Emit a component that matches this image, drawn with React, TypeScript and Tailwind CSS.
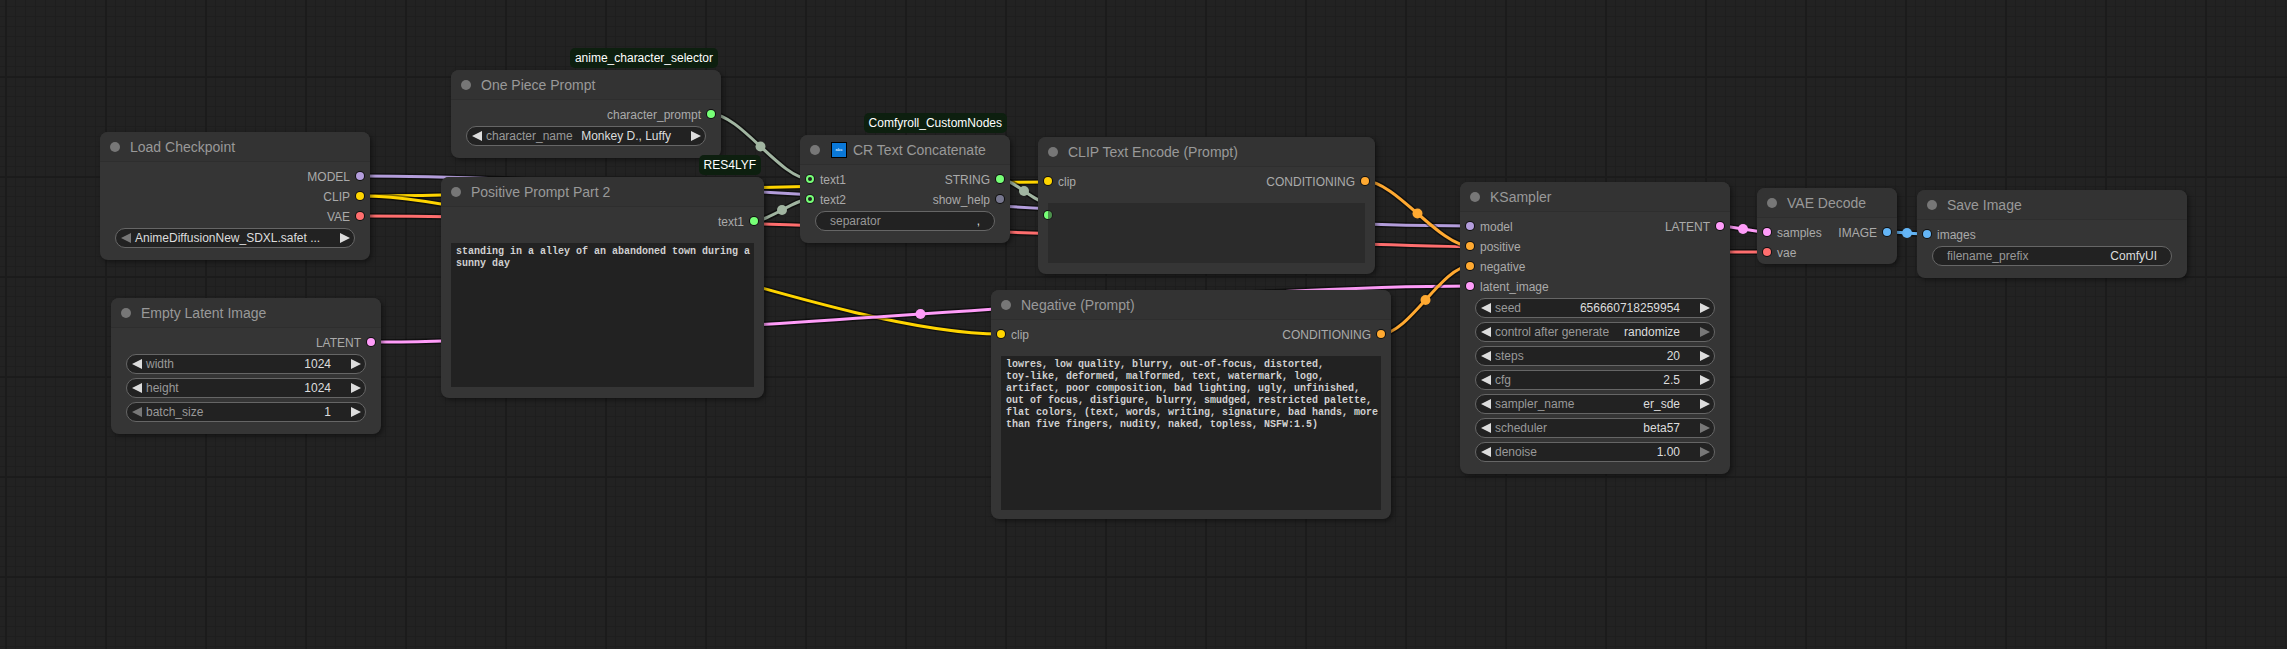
const wires = [
  { from: [361, 176], to: [1470, 226], color: "#B39DDB" },
  { from: [361, 196], to: [1048, 182], color: "#FFD500" },
  { from: [361, 196], to: [1001, 334], color: "#FFD500" },
  { from: [361, 216], to: [1766, 252], color: "#FF6E6E" },
  { from: [371, 342], to: [1470, 286], color: "#FF9CF9" },
  { from: [711, 114], to: [810, 179], color: "#A1B5A1" },
  { from: [754, 221], to: [810, 199], color: "#A1B5A1" },
  { from: [1000, 179], to: [1048, 203], color: "#A1B5A1" },
  { from: [1365, 181], to: [1470, 246], color: "#FFA931" },
  { from: [1381, 334], to: [1470, 266], color: "#FFA931" },
  { from: [1720, 226], to: [1766, 232], color: "#FF9CF9" },
  { from: [1887, 232], to: [1927, 234], color: "#64B5F6" },
];

function Wire({ from, to, color }: { from: number[]; to: number[]; color: string }) {
  const dist = Math.hypot(to[0] - from[0], to[1] - from[1]);
  const c1 = from[0] + dist * 0.25;
  const c2 = to[0] - dist * 0.25;
  const d = `M${from[0]} ${from[1]} C${c1} ${from[1]} ${c2} ${to[1]} ${to[0]} ${to[1]}`;
  const mx = (from[0] + 3 * c1 + 3 * c2 + to[0]) / 8;
  const my = (from[1] + to[1]) / 2;
  return (
    <g fill="none">
      <path d={d} stroke="#000" strokeOpacity="0.5" strokeWidth="6" />
      <path d={d} stroke={color} strokeWidth="3" />
      <circle cx={mx} cy={my} r="5" fill={color} />
    </g>
  );
}

function Arrow({ dir, dim }: { dir: "left" | "right"; dim?: boolean }) {
  return (
    <svg width="10" height="10" viewBox="0 0 10 10" className="shrink-0">
      <path d={dir === "left" ? "M10 0L0 5L10 10Z" : "M0 0L10 5L0 10Z"} fill={dim ? "#777" : "#ddd"} />
    </svg>
  );
}

function Slot({ color, hollow }: { color: string; hollow?: boolean }) {
  return hollow ? (
    <span className="block h-2 w-2 shrink-0 rounded-full border-2 bg-[#222] ring-1 ring-black/50" style={{ borderColor: color }} />
  ) : (
    <span className="block h-2 w-2 shrink-0 rounded-full ring-1 ring-black/70" style={{ backgroundColor: color }} />
  );
}

function Row({
  input,
  output,
  hollow,
}: {
  input?: [string, string];
  output?: [string, string];
  hollow?: boolean;
}) {
  return (
    <div className="flex h-5 items-center justify-between px-[6px] text-xs text-[#aaa]">
      {input ? (
        <div className="flex items-center gap-[6px]">
          <Slot color={input[1]} hollow={hollow} />
          <span className="pt-[2px]">{input[0]}</span>
        </div>
      ) : (
        <span />
      )}
      {output && (
        <div className="flex items-center gap-[6px]">
          <span className="pt-[2px]">{output[0]}</span>
          <Slot color={output[1]} />
        </div>
      )}
    </div>
  );
}

function Widget({
  label,
  value,
  dimLeft,
  dimRight,
}: {
  label?: string;
  value: string;
  dimLeft?: boolean;
  dimRight?: boolean;
}) {
  return (
    <div className="flex h-5 items-center rounded-full border border-[#666] bg-[#222] pl-[5px] pr-[4px] text-xs whitespace-nowrap">
      <Arrow dir="left" dim={dimLeft} />
      <span className="ml-1 text-[#999]">{label}</span>
      <span className="ml-auto mr-[20px] text-[#ddd]">{value}</span>
      <Arrow dir="right" dim={dimRight} />
    </div>
  );
}

function TextWidget({ label, value }: { label: string; value: string }) {
  return (
    <div className="flex h-5 items-center justify-between rounded-full border border-[#666] bg-[#222] px-[14px] text-xs">
      <span className="text-[#999]">{label}</span>
      <span className="text-[#ddd]">{value}</span>
    </div>
  );
}

function Widgets({ children }: { children: React.ReactNode }) {
  return <div className="mt-[2px] flex flex-col gap-1 px-[15px]">{children}</div>;
}

function Note({ children, className }: { children: React.ReactNode; className?: string }) {
  return (
    <div
      className={`mt-3 bg-[#222] pl-[5px] pt-[3px] font-["Liberation_Mono",monospace] text-[10px] leading-3 font-bold whitespace-pre text-[#d0d0d0] ${className}`}
    >
      {children}
    </div>
  );
}

function Node({
  title,
  badge,
  icon,
  className,
  children,
}: {
  title: string;
  badge?: string;
  icon?: boolean;
  className: string;
  children: React.ReactNode;
}) {
  return (
    <div className={`absolute rounded-lg bg-[#353535] shadow-[2px_2px_5px_rgba(0,0,0,0.45)] ${className}`}>
      {badge && (
        <div className="absolute right-[3px] bottom-full mb-[2px] flex h-5 items-center rounded-[5px] bg-[#0d1f0f] px-[5px] text-xs whitespace-nowrap text-white">
          {badge}
        </div>
      )}
      <div className="flex h-[30px] items-center rounded-t-lg border-b border-[#2e2e2e] bg-[#333] pl-[10px] text-sm text-[#999]">
        <span className="h-[10px] w-[10px] rounded-full bg-[#777]" />
        {icon ? (
          <>
            <span className="ml-[11px] flex h-4 w-4 items-center justify-center border border-black bg-[#0a78d8] text-[4px] font-bold text-[#cfe6ff]">
              abc
            </span>
            <span className="ml-[6px] pt-px">{title}</span>
          </>
        ) : (
          <span className="ml-[10px] pt-px">{title}</span>
        )}
      </div>
      <div className="pt-1">{children}</div>
    </div>
  );
}

export default function App() {
  return (
    <div className="relative h-[649px] w-[2287px] overflow-hidden bg-[#222] bg-[linear-gradient(to_right,#1b1b1b_2px,transparent_2px),linear-gradient(to_bottom,#1b1b1b_2px,transparent_2px),linear-gradient(to_right,#1e1e1e_1px,transparent_1px),linear-gradient(to_bottom,#1e1e1e_1px,transparent_1px)] bg-[size:100px_100px,100px_100px,10px_10px,10px_10px] bg-[position:5px_76px,5px_76px,5px_6px,5px_6px] font-['Liberation_Sans',Arial,sans-serif]">
      <svg className="absolute inset-0 h-full w-full">
        {wires.map((w, i) => (
          <Wire key={i} {...w} />
        ))}
      </svg>

      <Node title="Load Checkpoint" className="left-[100px] top-[132px] h-[128px] w-[270px]">
        <Row output={["MODEL", "#B39DDB"]} />
        <Row output={["CLIP", "#FFD500"]} />
        <Row output={["VAE", "#FF6E6E"]} />
        <Widgets>
          <Widget value="AnimeDiffusionNew_SDXL.safet ..." dimLeft />
        </Widgets>
      </Node>

      <Node title="One Piece Prompt" badge="anime_character_selector" className="left-[451px] top-[70px] h-[88px] w-[270px]">
        <Row output={["character_prompt", "#77FF77"]} />
        <Widgets>
          <Widget label="character_name" value="Monkey D., Luffy" />
        </Widgets>
      </Node>

      <Node title="Positive Prompt Part 2" badge="RES4LYF" className="left-[441px] top-[177px] h-[221px] w-[323px]">
        <Row output={["text1", "#77FF77"]} />
        <div className="px-[10px]">
          <Note className="h-[144px]">standing in a alley of an abandoned town during a{"\n"}sunny day</Note>
        </div>
      </Node>

      <Node title="Empty Latent Image" className="left-[111px] top-[298px] h-[136px] w-[270px]">
        <Row output={["LATENT", "#FF9CF9"]} />
        <Widgets>
          <Widget label="width" value="1024" />
          <Widget label="height" value="1024" />
          <Widget label="batch_size" value="1" dimLeft />
        </Widgets>
      </Node>

      <Node title="CR Text Concatenate" badge="Comfyroll_CustomNodes" icon className="left-[800px] top-[135px] h-[108px] w-[210px]">
        <div className="flex h-5 items-center justify-between px-[6px] text-xs text-[#aaa]">
          <div className="flex items-center gap-[6px]">
            <Slot color="#77FF77" hollow />
            <span className="pt-[2px]">text1</span>
          </div>
          <div className="flex items-center gap-[6px]">
            <span className="pt-[2px]">STRING</span>
            <Slot color="#77FF77" />
          </div>
        </div>
        <div className="flex h-5 items-center justify-between px-[6px] text-xs text-[#aaa]">
          <div className="flex items-center gap-[6px]">
            <Slot color="#77FF77" hollow />
            <span className="pt-[2px]">text2</span>
          </div>
          <div className="flex items-center gap-[6px]">
            <span className="pt-[2px]">show_help</span>
            <Slot color="#77778f" />
          </div>
        </div>
        <Widgets>
          <TextWidget label="separator" value="," />
        </Widgets>
      </Node>

      <Node title="CLIP Text Encode (Prompt)" className="left-[1038px] top-[137px] h-[137px] w-[337px]">
        <Row input={["clip", "#FFD500"]} output={["CONDITIONING", "#FFA931"]} />
        <div className="relative px-[10px]">
          <span className="absolute left-[6px] top-2 block">
            <Slot color="#77FF77" />
          </span>
          <div className="relative mt-3 h-[60px] bg-[#222]/50" />
        </div>
      </Node>

      <Node title="Negative (Prompt)" className="left-[991px] top-[290px] h-[229px] w-[400px]">
        <Row input={["clip", "#FFD500"]} output={["CONDITIONING", "#FFA931"]} />
        <div className="px-[10px]">
          <Note className="h-[154px]">
            {`lowres, low quality, blurry, out-of-focus, distorted,
toy-like, deformed, malformed, text, watermark, logo,
artifact, poor composition, bad lighting, ugly, unfinished,
out of focus, disfigure, blurry, smudged, restricted palette,
flat colors, (text, words, writing, signature, bad hands, more
than five fingers, nudity, naked, topless, NSFW:1.5)`}
          </Note>
        </div>
      </Node>

      <Node title="KSampler" className="left-[1460px] top-[182px] h-[292px] w-[270px]">
        <Row input={["model", "#B39DDB"]} output={["LATENT", "#FF9CF9"]} />
        <Row input={["positive", "#FFA931"]} />
        <Row input={["negative", "#FFA931"]} />
        <Row input={["latent_image", "#FF9CF9"]} />
        <Widgets>
          <Widget label="seed" value="656660718259954" />
          <Widget label="control after generate" value="randomize" dimRight />
          <Widget label="steps" value="20" />
          <Widget label="cfg" value="2.5" />
          <Widget label="sampler_name" value="er_sde" />
          <Widget label="scheduler" value="beta57" dimRight />
          <Widget label="denoise" value="1.00" dimRight />
        </Widgets>
      </Node>

      <Node title="VAE Decode" className="left-[1757px] top-[188px] h-[76px] w-[140px]">
        <Row input={["samples", "#FF9CF9"]} output={["IMAGE", "#64B5F6"]} />
        <Row input={["vae", "#FF6E6E"]} />
      </Node>

      <Node title="Save Image" className="left-[1917px] top-[190px] h-[88px] w-[270px]">
        <Row input={["images", "#64B5F6"]} />
        <Widgets>
          <TextWidget label="filename_prefix" value="ComfyUI" />
        </Widgets>
      </Node>
    </div>
  );
}
